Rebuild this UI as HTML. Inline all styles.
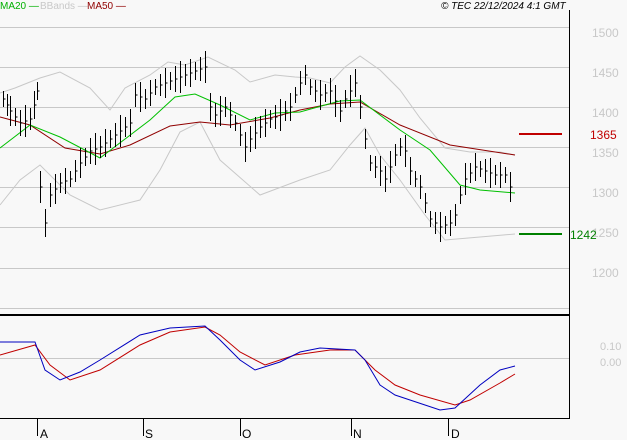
<!DOCTYPE html>
<html><head><meta charset="utf-8"><style>
body{margin:0;background:#f8f8f8;width:627px;height:440px;overflow:hidden;font-family:"Liberation Sans",sans-serif}
svg{position:absolute;left:0;top:0}
</style></head><body>
<svg id="s" width="627" height="440" xmlns="http://www.w3.org/2000/svg">
<rect width="627" height="440" fill="#f8f8f8"/>
<g stroke="#c8c8c8" stroke-width="1">
<line x1="0" y1="27.5" x2="569" y2="27.5"/><line x1="0" y1="67.5" x2="569" y2="67.5"/>
<line x1="0" y1="107.5" x2="569" y2="107.5"/><line x1="0" y1="147.5" x2="569" y2="147.5"/>
<line x1="0" y1="187.5" x2="569" y2="187.5"/><line x1="0" y1="227.5" x2="569" y2="227.5"/>
<line x1="0" y1="268.5" x2="569" y2="268.5"/><line x1="0" y1="308.5" x2="569" y2="308.5"/>
<line x1="0" y1="358.5" x2="569" y2="358.5"/>
</g>
<line x1="569.5" y1="10" x2="569.5" y2="419" stroke="#000"/>
<line x1="0" y1="315" x2="570" y2="315" stroke="#000" stroke-width="2"/>
<line x1="0" y1="418.5" x2="570" y2="418.5" stroke="#000"/>
<g stroke="#000"><line x1="37.5" y1="418" x2="37.5" y2="436"/><line x1="143.5" y1="418" x2="143.5" y2="436"/><line x1="240.5" y1="418" x2="240.5" y2="436"/><line x1="351.5" y1="418" x2="351.5" y2="436"/><line x1="448.5" y1="418" x2="448.5" y2="436"/></g>
<g font-size="12" fill="#000"><text x="40" y="438">A</text><text x="145" y="438">S</text><text x="242" y="438">O</text><text x="353" y="438">N</text><text x="451" y="438">D</text></g>
<g font-size="12" fill="#c8c8c8"><text x="592" y="37">1500</text><text x="592" y="77">1450</text><text x="592" y="117">1400</text><text x="592" y="157">1350</text><text x="592" y="197">1300</text><text x="592" y="237">1250</text><text x="592" y="277">1200</text>
<text x="600" y="350" font-size="11">0.10</text><text x="600" y="366" font-size="11">0.00</text></g>
<text x="590" y="139" font-size="12" fill="#c00000">1365</text>
<text x="570" y="239" font-size="12" fill="#008000">1242</text>
<line x1="519" y1="134" x2="562" y2="134" stroke="#c00000" stroke-width="2"/>
<line x1="519" y1="234" x2="562" y2="234" stroke="#008000" stroke-width="2"/>
<g font-size="10"><text x="0" y="9" fill="#00b000">MA20 —</text><text x="40" y="9" fill="#c8c8c8">BBands —</text><text x="87" y="9" fill="#900000">MA50 —</text></g>
<text x="441" y="9" font-size="10" font-style="italic" fill="#000">© TEC 22/12/2024 4:1 GMT</text>
<g fill="none">
<polyline stroke="#c8c8c8" points="0,93 15,88 40,78 60,72 90,88 110,110 125,88 150,75 168,62 185,65 208,57 235,70 250,82 275,75 295,77 310,78 330,83 345,67 360,56 380,70 400,90 420,118 445,148 470,152 500,152 515,155"/>
<polyline stroke="#c8c8c8" points="0,205 20,180 40,165 70,195 100,210 140,200 160,170 180,132 200,122 220,160 260,195 300,180 330,170 350,145 365,128 380,155 400,180 425,215 445,240 480,237 515,234"/>
<polyline stroke="#900000" points="0,117 30,125 65,148 100,154 130,145 170,126 200,122 230,125 270,118 300,110 330,104 360,102 400,125 450,145 515,155"/>
<polyline stroke="#00c000" points="0,148 30,125 60,137 100,158 150,120 175,97 195,94 220,105 250,120 275,113 300,112 325,105 340,101 360,100 400,130 430,150 460,185 480,190 515,193"/>
<polyline stroke="#c00000" points="0,355 35,345 50,365 70,380 100,370 140,345 170,332 205,327 220,335 240,352 265,365 295,355 330,350 355,350 375,370 395,385 420,395 455,405 470,400 500,383 515,374"/>
<polyline stroke="#0000c0" points="0,342 35,342 45,370 60,380 80,372 100,360 140,335 170,328 205,326 220,340 240,360 255,370 280,362 300,352 320,348 355,350 365,360 380,385 395,395 410,400 425,405 440,410 455,408 480,385 500,370 515,366"/>
</g>
<g id="bars" stroke="#000"></g>
</svg>
<script>
var k=[[3,1410],[10,1395],[20,1380],[30,1385],[37,1420],[40,1300],[45,1255],[50,1290],[60,1305],[70,1310],[80,1330],[90,1345],[100,1350],[110,1360],[120,1370],[130,1380],[135,1415],[145,1410],[155,1425],[165,1430],[175,1435],[185,1440],[195,1445],[205,1450],[210,1400],[215,1390],[225,1400],[235,1380],[245,1350],[250,1360],[260,1375],[270,1385],[280,1390],[290,1400],[300,1430],[305,1440],[310,1425],[320,1415],[330,1420],[340,1395],[345,1410],[350,1420],[355,1430],[360,1400],[365,1360],[370,1330],[380,1320],[385,1310],[395,1340],[400,1350],[405,1345],[410,1320],[420,1300],[425,1280],[430,1260],[440,1250],[450,1255],[455,1265],[460,1290],[465,1310],[475,1325],[485,1320],[495,1315],[505,1315],[510,1300],[515,1300]];
var s="",g=document.getElementById("bars");
function py(p){return 27+(1500-p)*0.8}
for(var i=0;i<k.length-1;i++){var a=k[i],b=k[i+1];var n=Math.max(1,Math.round((b[0]-a[0])/4.3));for(var j=0;j<n;j++){var x=Math.round(a[0]+(b[0]-a[0])*j/n)+0.5;var p=a[1]+(b[1]-a[1])*j/n;var r=8+((i*7+j*3)%9);var y=py(p);s+='<line x1="'+x+'" y1="'+(y-r)+'" x2="'+x+'" y2="'+(y+r)+'"/><line x1="'+x+'" y1="'+y+'" x2="'+(x+2)+'" y2="'+y+'"/>';}}
g.innerHTML=s;
</script>
</body></html>
